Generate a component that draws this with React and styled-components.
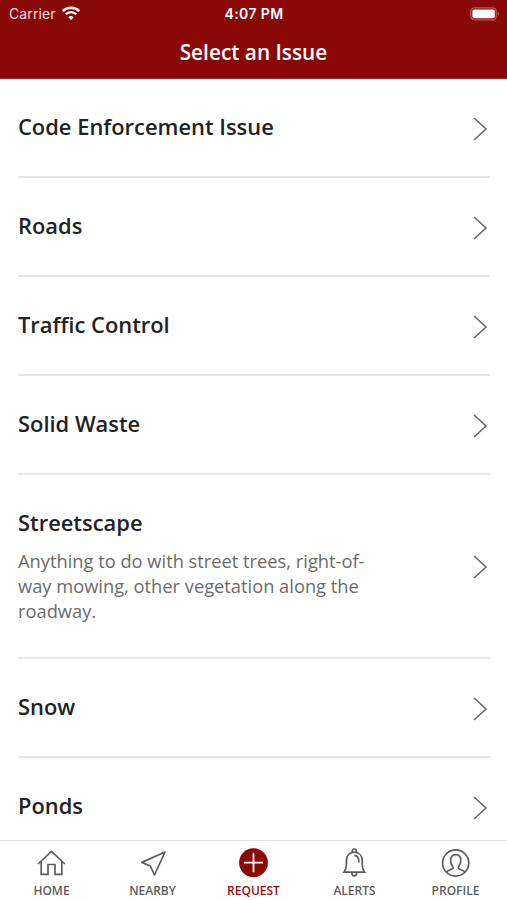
import React from 'react'
import styled, { createGlobalStyle } from 'styled-components'

const GlobalStyle = createGlobalStyle`
  * {
    box-sizing: border-box;
  }
  body {
    margin: 0;
    background: #fff;
    font-family: 'Open Sans', 'Noto Sans', sans-serif;
  }
`

const Screen = styled.div`
  display: flex;
  flex-direction: column;
  width: 507px;
  height: 900px;
  overflow: hidden;
  background: #fff;
`
const Header = styled.header`
  flex: none;
  height: 79px;
  color: #fff;
  background: #890808;
  border-bottom: 1px solid #a02c2c;
`
const StatusBar = styled.div`
  display: grid;
  grid-template-columns: 1fr auto 1fr;
  align-items: center;
  height: 27px;
  padding: 0 7px 0 9px;
  font-family: Inter, 'Liberation Sans', sans-serif;
  font-size: 14px;
`
const Carrier = styled.div`
  display: flex;
  align-items: center;
  gap: 5px;
  color: #f3dede;
  letter-spacing: 0.1px;
`
const Time = styled.div`
  margin-right: 1px;
  font-weight: 600;
  letter-spacing: 0.4px;
`
const Battery = styled.svg`
  justify-self: end;
`
const Title = styled.h1`
  margin: 0;
  font-size: 20.8px;
  font-weight: 600;
  line-height: 51px;
  text-align: center;
`
const List = styled.ul`
  flex: 1;
  min-height: 0;
  margin: 0;
  padding: 0 17px 0 18px;
  overflow: hidden;
  list-style: none;
`
const Row = styled.li`
  display: flex;
  align-items: center;
  justify-content: space-between;
  height: ${props => (props.$tall ? 184 : 99)}px;
  padding: 2px 2px 0 0;
  border-bottom: 2px solid #e7e7e7;
`
const Text = styled.div`
  padding-bottom: 3px;
`
const Name = styled.h2`
  margin: 0;
  color: #222;
  font-size: 21.9px;
  font-weight: 600;
  line-height: 30px;
`
const Description = styled.p`
  width: 360px;
  margin: 10px 0 0;
  color: #6b6b6b;
  font-size: 18.3px;
  line-height: 25px;
`
const TabBar = styled.nav`
  display: flex;
  flex: none;
  height: 60px;
  padding: 0 1px;
  background: #fff;
  border-top: 1px solid #e4e4e4;
`
const Tab = styled.a`
  display: flex;
  flex: 1;
  flex-direction: column;
  align-items: center;
  padding-top: 7px;
  color: ${props => (props.$active ? '#930d10' : '#5d5d5d')};
  font-size: 12px;
  font-weight: 600;
  line-height: 16px;
  svg {
    margin-bottom: 5px;
  }
`

const Wifi = () => (
  <svg width="20" height="16" viewBox="0 0 20 16" fill="none" stroke="#fff">
    <path d="M1.7 5.1a11.8 11.8 0 0 1 16.6 0" strokeWidth="2.4" />
    <path d="M4.7 8.3a7.5 7.5 0 0 1 10.6 0" strokeWidth="2.3" />
    <path d="M10 14l-2.7-2.8a3.9 3.9 0 0 1 5.4 0z" fill="#fff" stroke="none" />
  </svg>
)

const Chevron = () => (
  <svg width="16" height="24" viewBox="0 0 16 24" fill="none" stroke="#686868">
    <path d="M2 1l12 11L2 23" strokeWidth="1.6" />
  </svg>
)

const Icon = ({ children }) => (
  <svg
    width="30"
    height="30"
    viewBox="0 0 30 30"
    fill="none"
    stroke="currentColor"
    strokeWidth="1.7"
  >
    {children}
  </svg>
)

const issues = [
  { name: 'Code Enforcement Issue' },
  { name: 'Roads' },
  { name: 'Traffic Control' },
  { name: 'Solid Waste' },
  {
    name: 'Streetscape',
    description:
      'Anything to do with street trees, right-of-way mowing, other vegetation along the roadway.',
  },
  { name: 'Snow' },
  { name: 'Ponds' },
]

const tabs = [
  {
    label: 'HOME',
    icon: (
      <path d="M1.1 16L14.5 3.4 27.9 16M4.2 13.4V26.3H11V16.5H18V26.3H24.8V13.4" />
    ),
  },
  {
    label: 'NEARBY',
    icon: <path d="M27 4L3.8 14.4L12.3 18L16.5 27z" strokeLinejoin="round" />,
  },
  {
    label: 'REQUEST',
    icon: (
      <>
        <circle cx="14.5" cy="14.7" r="14.4" fill="#890808" stroke="none" />
        <path d="M14.5 5.2v19M5 14.7h19" stroke="#fff" strokeWidth="1.8" />
      </>
    ),
  },
  {
    label: 'ALERTS',
    icon: (
      <>
        <path d="M12.3 4V3a2 2 0 0 1 4 0v1" />
        <path d="M4 24.2C6 21.7 6.4 19.8 6.4 16V12.5C6.4 7.5 9.6 4.2 14.3 4.2S22.2 7.5 22.2 12.5V16C22.2 19.8 22.6 21.7 24.6 24.2z" />
        <path d="M12 24.5v1.1a2.3 2.3 0 0 0 4.6 0v-1.1" />
        <path d="M14.3 7.4c3.4 0 4.6 2.8 4.6 7" />
      </>
    ),
  },
  {
    label: 'PROFILE',
    icon: (
      <>
        <circle cx="14.7" cy="15" r="13.1" />
        <path d="M5.4 24.1C6.9 22.4 12.2 21.3 12.2 19.7C12.2 18.3 9.6 17.2 9.6 12.5C9.6 8.8 11.5 6.6 14.7 6.6S19.8 8.8 19.8 12.5C19.8 17.2 17.2 18.3 17.2 19.7C17.2 21.3 22.5 22.4 24 24.1" />
      </>
    ),
  },
]

const IssueRow = ({ name, description }) => (
  <Row $tall={Boolean(description)}>
    <Text>
      <Name>{name}</Name>
      {description && <Description>{description}</Description>}
    </Text>
    <Chevron />
  </Row>
)

const App = () => (
  <Screen>
    <GlobalStyle />
    <Header>
      <StatusBar>
        <Carrier>
          Carrier
          <Wifi />
        </Carrier>
        <Time>4:07 PM</Time>
        <Battery width="30" height="14" viewBox="0 0 30 14" fill="none">
          <rect x="0.8" y="0.8" width="25.4" height="12" rx="3.6" stroke="#b05c5c" strokeWidth="1.3" />
          <rect x="2.4" y="2.4" width="22.4" height="8.8" rx="1.6" fill="#fff" />
          <path d="M27.6 4.6a2.4 2.4 0 0 1 0 4.4z" fill="#b05c5c" />
        </Battery>
      </StatusBar>
      <Title>Select an Issue</Title>
    </Header>
    <List>
      {issues.map(issue => (
        <IssueRow key={issue.name} {...issue} />
      ))}
    </List>
    <TabBar>
      {tabs.map(({ label, icon }) => (
        <Tab key={label} $active={label === 'REQUEST'}>
          <Icon>{icon}</Icon>
          {label}
        </Tab>
      ))}
    </TabBar>
  </Screen>
)

export default App
